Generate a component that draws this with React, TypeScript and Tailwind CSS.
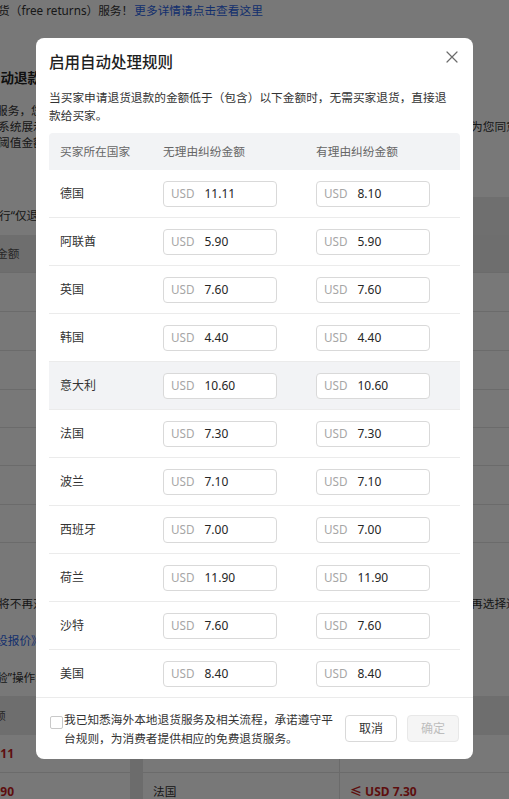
import React from "react";

const rows: [string, string, string][] = [
  ["德国", "11.11", "8.10"],
  ["阿联酋", "5.90", "5.90"],
  ["英国", "7.60", "7.60"],
  ["韩国", "4.40", "4.40"],
  ["意大利", "10.60", "10.60"],
  ["法国", "7.30", "7.30"],
  ["波兰", "7.10", "7.10"],
  ["西班牙", "7.00", "7.00"],
  ["荷兰", "11.90", "11.90"],
  ["沙特", "7.60", "7.60"],
  ["美国", "8.40", "8.40"],
];

function MoneyInput({ value }: { value: string }) {
  return (
    <div className="flex h-[26px] w-[114px] items-center rounded-[4px] border border-[#d9d9d9] bg-white pl-[7px]">
      <span className="text-[11.7px] text-[#a6a6a6]">USD</span>
      <span className="ml-[10px] text-[12px] text-[#262626]">{value}</span>
    </div>
  );
}

function BgRow({
  h,
  left,
  right,
  leftBg = "",
  rightBg = "",
  border = false,
}: {
  h: string;
  left?: React.ReactNode;
  right?: React.ReactNode;
  leftBg?: string;
  rightBg?: string;
  border?: boolean;
}) {
  return (
    <div className={`flex ${h} ${border ? "border-b border-[#e3e3e3]" : ""}`}>
      <div className={`flex w-[468px] items-center overflow-hidden whitespace-nowrap ${leftBg}`}>{left}</div>
      <div className={`flex flex-1 items-center overflow-hidden whitespace-nowrap ${rightBg}`}>{right}</div>
    </div>
  );
}

export default function App() {
  return (
    <div className="relative h-[799px] w-[509px] overflow-hidden bg-white font-['Noto_Sans','Noto_Sans_CJK_SC',sans-serif] text-[#333]">
      {/* background page */}
      <div className="flex flex-col text-[11.7px]">
        <div className="ml-[-2px] flex h-[22px] items-center whitespace-nowrap">
          <span>货（free returns）服务！</span>
          <span className="ml-[1px] text-[#2a64e8]">更多详情请点击查看这里</span>
        </div>
        <div className="mt-[44px] flex h-[24px] items-center whitespace-nowrap">
          <span className="ml-[-13px] text-[13.5px] font-bold text-[#222]">自动退款设置</span>
        </div>
        <div className="mt-[12px] flex flex-col leading-[16px]">
          <BgRow h="h-[16px]" left={<span className="ml-[-4px]">服务，您可以设置自动退款</span>} />
          <BgRow h="h-[16px]" left={<span className="ml-[-2px]">系统展示</span>} right={<span className="ml-[3px]">为您同意</span>} />
          <BgRow h="h-[16px]" left={<span className="ml-[-2px]">阈值金额</span>} />
        </div>
        <div className="mt-[47px]">
          <BgRow h="h-[38px]" left={<span className="ml-[-1px]">行“仅退款”</span>} rightBg="bg-[#ececec]" />
          <BgRow
            h="h-[38px]"
            left={<span className="ml-[-4px] text-[#555]">金额</span>}
            leftBg="bg-[#e9e9e9]"
            rightBg="bg-[#e9e9e9]"
            border
          />
          <BgRow h="h-[39px]" border />
          <BgRow h="h-[39px]" border />
          <BgRow h="h-[39px]" border />
          <BgRow h="h-[38px]" border />
          <BgRow h="h-[38px]" border />
          <BgRow h="h-[39px]" border />
          <BgRow h="h-[38px]" border />
        </div>
        <div className="mt-[42px]">
          <BgRow h="h-[37px]" left={<span className="ml-[-2px]">将不再对</span>} right={<span className="ml-[3px]">再选择退</span>} />
          <BgRow h="h-[37px]" left={<span className="ml-[-4px] text-[#2a64e8]">设报价》</span>} />
          <BgRow h="h-[37px]" left={<span className="ml-[-4px]">验”操作:</span>} />
        </div>
        <div className="flex">
          <div className="flex w-[130px] flex-col">
            <div className="flex h-[39px] items-center bg-[#e9e9e9] text-[#555]">
              <span className="ml-[-6px]">额</span>
            </div>
            <div className="flex h-[38px] items-center border-b border-[#e3e3e3]">
              <span className="ml-[-3px] text-[12px] font-bold text-[#c81e1e]">.11</span>
            </div>
            <div className="flex h-[38px] items-center border-b border-[#e3e3e3]">
              <span className="ml-[-3px] text-[12px] font-bold text-[#c81e1e]">.90</span>
            </div>
          </div>
          <div className="w-[13px] bg-[#e6e6e6]" />
          <div className="flex flex-1 flex-col">
            <div className="flex h-[39px] bg-[#e9e9e9]" />
            <div className="flex h-[38px] border-b border-[#e3e3e3]">
              <div className="w-[197px] border-r border-[#e3e3e3]" />
            </div>
            <div className="flex h-[38px] items-center border-b border-[#e3e3e3]">
              <div className="flex h-full w-[197px] items-center border-r border-[#e3e3e3] pl-[10px]">法国</div>
              <span className="ml-[10px] text-[12px] font-bold text-[#c81e1e]">≤ USD 7.30</span>
            </div>
          </div>
        </div>
      </div>

      {/* overlay */}
      <div className="absolute inset-0 bg-black/[0.53]">
        <div className="ml-[36px] mt-[38px] flex h-[721px] w-[437px] flex-col overflow-hidden rounded-[8px] bg-white">
          <div className="flex flex-1 flex-col overflow-hidden">
            <div className="flex items-start justify-between pl-[13px] pr-[15px] pt-[12px]">
              <div className="text-[15.5px] font-medium leading-[24px] text-[#1f1f1f]">启用自动处理规则</div>
              <svg width="12" height="12" viewBox="0 0 12 12" className="mt-[1px]">
                <path d="M1 1L11 11M11 1L1 11" stroke="#6b6b6b" strokeWidth="1.2" strokeLinecap="round" />
              </svg>
            </div>
            <div className="mt-[14px] px-[13px] text-[11.7px] leading-[18px] text-[#333]">
              当买家申请退货退款的金额低于（包含）以下金额时，无需买家退货，直接退
              <br />
              款给买家。
            </div>
            <div className="mx-[13px] mt-[9px]">
              <div className="grid h-[37px] grid-cols-[103px_153px_154px] items-center rounded-t-[4px] bg-[#f2f3f5] text-[11.7px] text-[#666]">
                <div className="pl-[11px]">买家所在国家</div>
                <div className="pl-[11px]">无理由纠纷金额</div>
                <div className="pl-[11px]">有理由纠纷金额</div>
              </div>
              {rows.map(([c, a, b]) => (
                <div
                  key={c}
                  className={`grid h-[48px] grid-cols-[103px_153px_154px] items-center border-b border-[#ebebeb] ${
                    c === "意大利" ? "bg-[#f2f3f5]" : ""
                  }`}
                >
                  <div className="pl-[11px] text-[12px] text-[#333]">{c}</div>
                  <div className="pl-[11px]">
                    <MoneyInput value={a} />
                  </div>
                  <div className="pl-[11px]">
                    <MoneyInput value={b} />
                  </div>
                </div>
              ))}
            </div>
          </div>
          <div className="flex h-[62px] shrink-0 items-center justify-between border-t border-[#ebebeb] px-[14px]">
            <div className="flex items-start">
              <div className="mt-[6px] h-[13px] w-[13px] rounded-[2px] border border-[#c9c9c9] bg-white" />
              <div className="ml-[1px] whitespace-nowrap text-[11.7px] leading-[19px] text-[#333]">
                我已知悉海外本地退货服务及相关流程，承诺遵守平
                <br />
                台规则，为消费者提供相应的免费退货服务。
              </div>
            </div>
            <div className="flex items-center gap-[10px]">
              <div className="flex h-[27px] w-[52px] items-center justify-center rounded-[4px] border border-[#d9d9d9] bg-white text-[12px] text-[#333]">
                取消
              </div>
              <div className="flex h-[27px] w-[52px] items-center justify-center rounded-[4px] border border-[#e8e8e8] bg-[#f5f5f5] text-[12px] text-[#bdbdbd]">
                确定
              </div>
            </div>
          </div>
        </div>
      </div>
    </div>
  );
}
